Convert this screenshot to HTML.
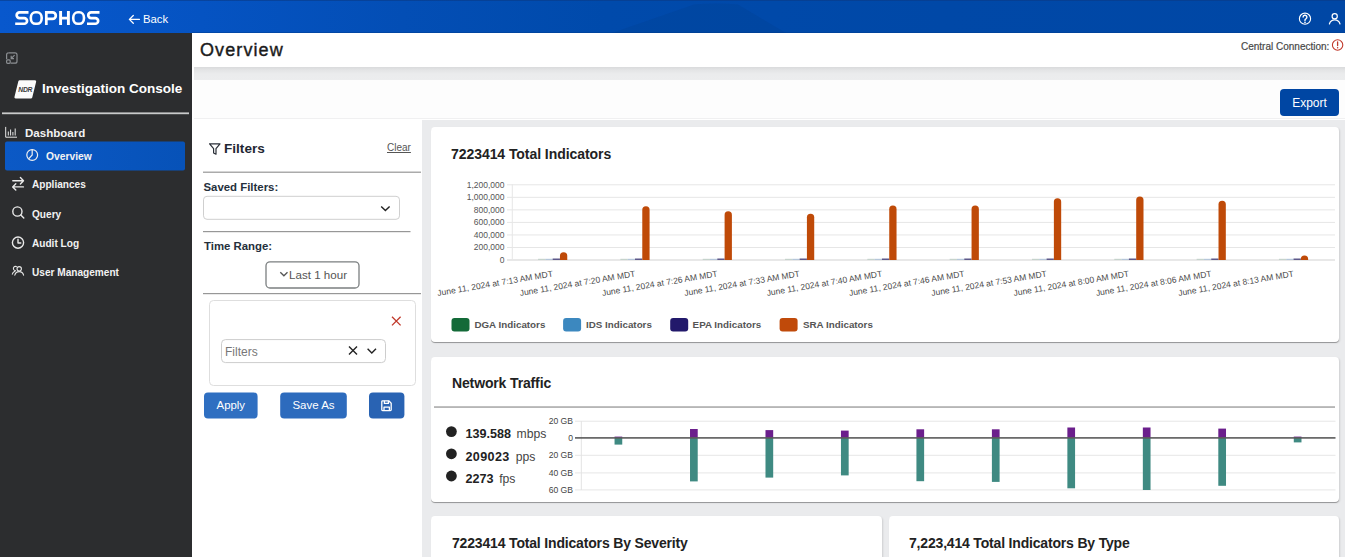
<!DOCTYPE html>
<html><head><meta charset="utf-8">
<style>
*{box-sizing:border-box;margin:0;padding:0}
svg text{font-family:"Liberation Sans",sans-serif}
html,body{width:1345px;height:557px;overflow:hidden;background:#fff;font-family:"Liberation Sans",sans-serif}
.a{position:absolute}
#hdr{left:0;top:0;width:1345px;height:33px;background:linear-gradient(90deg,#0858cd 0%,#0553c2 15%,#034eb5 30%,#004aab 45%,#0048a7 70%,#0047a5 100%)}
#side{left:0;top:33px;width:192px;height:524px;background:#2c2d2f}
#titlebar{left:192px;top:33px;width:1153px;height:34px;background:#fff}
#band{left:194px;top:66.5px;width:1151px;height:13.5px;background:linear-gradient(180deg,#d9dadc 0%,#e4e5e6 25%,#ebeced 55%,#ecedee 100%)}
#exportbar{left:194px;top:80px;width:1151px;height:39px;background:#fdfdfd;border-bottom:1px solid #f0f0f1}
#filters{left:194px;top:120px;width:228px;height:437px;background:#fff}
#gray{left:422px;top:120px;width:923px;height:437px;background:#eaebed}
.card{position:absolute;background:#fff;border-radius:4px;box-shadow:0 1px 0 rgba(0,0,0,.28),1px 1px 2px rgba(0,0,0,.12)}
.ttl{position:absolute;font-weight:bold;font-size:14px;color:#222;white-space:nowrap}
.nav{position:absolute;color:#f2f2f2;font-weight:bold;font-size:11px;white-space:nowrap}
.btn{position:absolute;background:#2d6fc0;border-radius:3px;color:#fff;font-size:12.5px;text-align:center}
</style></head><body>
<div id="hdr" class="a"></div>
<svg class="a" style="left:0;top:0" width="110" height="33" viewBox="0 0 110 33">
 <g fill="none" stroke="#fff" stroke-width="2.7">
  <path d="M28.5 12.35H19.5A2.85 2.85 0 0 0 19.5 18.05H24.2A2.85 2.85 0 0 1 24.2 23.75H15.2"/>
  <rect x="30.85" y="12.3" width="10.8" height="11.5" rx="4.6" ry="5.2" stroke-width="2.6"/>
  <path d="M46.3 25.1V12.35H52.5A3.3 3.3 0 0 1 52.5 18.95H46.3"/>
  <path d="M60.6 11V25.1M68.4 11V25.1M60.6 18.1H68.4" stroke-width="2.9"/>
  <rect x="73.25" y="12.3" width="10.7" height="11.5" rx="4.6" ry="5.2" stroke-width="2.6"/>
  <path d="M99.5 12.35H91.1A2.85 2.85 0 0 0 91.1 18.05H95.3A2.85 2.85 0 0 1 95.3 23.75H87"/>
 </g>
</svg>
<div class="a" style="left:143px;top:12.5px;color:#fff;font-size:11.3px;white-space:nowrap">Back</div>


<div id="side" class="a"></div>

<!-- sidebar -->
<svg class="a" style="left:0;top:0" width="192" height="300" viewBox="0 0 192 300">
 <g fill="none" stroke="#8b8e92" stroke-width="1.2">
  <path d="M8.6 52.8h6.4a2 2 0 0 1 2 2v6.4a2 2 0 0 1-2 2h-4.4"/>
  <path d="M6.6 59.2v-4.4a2 2 0 0 1 2-2"/>
  <rect x="6.6" y="59.9" width="3.6" height="3.4" rx="1"/>
  <path d="M14.6 55.2l-3.2 3.2M11.2 55.8v2.8h2.8"/>
 </g>
  <path d="M18.4 80.2h16.6a1.2 1.2 0 0 1 1.15 1.5l-3.9 15.8a1.4 1.4 0 0 1-1.35 1H15.6a1.2 1.2 0 0 1-1.15-1.5l3.9-15.8a1.4 1.4 0 0 1 1.35-1z" fill="#fbfbfb"/>
 <text x="25.2" y="92.2" font-family="Liberation Sans" font-weight="bold" font-style="italic" font-size="6.8" fill="#3a3a3a" text-anchor="middle" letter-spacing="-0.3">NDR</text>
 <rect x="2" y="112.4" width="187" height="1.8" fill="#c9cacb"/>
 <g fill="none" stroke="#e8e8e8" stroke-width="1">
  <path d="M5.7 126.9v10.3h11.3"/>
  <path d="M8.3 135.5v-4M10.6 135.5v-6M12.9 135.5v-3.5M15.2 135.5v-7"/>
 </g>
 <defs><linearGradient id="hl" x1="0" x2="1" y1="0" y2="0"><stop offset="0" stop-color="#0b59c6"/><stop offset="1" stop-color="#0752b8"/></linearGradient></defs><rect x="5" y="141.5" width="180" height="29" rx="2" fill="url(#hl)"/>
 <g fill="none" stroke="#f0f0f0" stroke-width="1.2">
  <circle cx="32.2" cy="155" r="5.4"/>
  <path d="M32.2 149.6v5.4l-3.6 3.8"/>
 </g>
 <g fill="none" stroke="#eaeaea" stroke-width="1.4" stroke-linecap="round" stroke-linejoin="round">
  <path d="M12.8 180.8h10.6M20.4 177.6l3.1 3.2-3.1 3.2"/>
  <path d="M23.4 186.9H12.8M15.8 183.7l-3.1 3.2 3.1 3.2"/>
  <circle cx="17.4" cy="211.5" r="4.6"/>
  <path d="M20.8 214.9l3 3.2"/>
  <circle cx="18" cy="242.6" r="5.6"/>
  <path d="M18 239.2v3.8h2.8"/>
 </g>
 <g fill="none" stroke="#e6e6e6" stroke-width="1.1" stroke-linecap="round">
  <circle cx="19.2" cy="268.8" r="2.2"/>
  <path d="M14.8 275.2c0.6-2.4 2.4-3.6 4.4-3.6s3.8 1.2 4.4 3.6"/>
  <path d="M16.4 266.6a2.1 2.1 0 1 0-1 4M12.3 274.2c.4-1.6 1.4-2.6 2.6-3"/>
 </g>
</svg>
<div class="a" style="left:42px;top:81px;color:#fff;font-weight:bold;font-size:13.5px;white-space:nowrap">Investigation Console</div>
<div class="nav" style="left:25px;top:127px;font-size:11.55px">Dashboard</div>
<div class="nav" style="left:46px;top:151px;font-size:10.3px">Overview</div>
<div class="nav" style="left:32px;top:179.3px;font-size:10.1px">Appliances</div>
<div class="nav" style="left:32px;top:208.5px;font-size:10.1px">Query</div>
<div class="nav" style="left:32px;top:237.5px;font-size:10.1px">Audit Log</div>
<div class="nav" style="left:32px;top:266.5px;font-size:10.1px">User Management</div>
<div id="titlebar" class="a"></div>
<div class="a" style="left:200px;top:40px;font-size:18px;color:#1b1b1b;letter-spacing:1.1px;-webkit-text-stroke:0.4px #1b1b1b">Overview</div>
<div class="a" style="left:1241px;top:41px;font-size:10px;color:#484848;-webkit-text-stroke:0.2px #484848;white-space:nowrap">Central Connection:</div>
<div id="band" class="a"></div>
<div id="exportbar" class="a"></div>
<div class="a" style="left:1280px;top:89px;width:59px;height:27px;background:#0046a3;border-radius:4px;color:#fff;font-size:12px;text-align:center;line-height:29px">Export</div>
<div id="filters" class="a"></div>
<div id="gray" class="a"></div>
<!-- filters panel -->
<svg class="a" style="left:194px;top:120px" width="228" height="310" viewBox="194 120 228 310">
 <path d="M209.6 143.8h10.4l-4 4.8v5.6l-2.4-1.2v-4.4z" fill="none" stroke="#2a2f38" stroke-width="1.2" stroke-linejoin="round"/>
 <rect x="203" y="171.6" width="218" height="1.2" fill="#979797"/>
 <rect x="203.5" y="196.3" width="196" height="23" rx="3.5" fill="#fff" stroke="#cfcfcf" stroke-width="1"/>
 <path d="M381.2 206.4l4.2 4.2 4.2-4.2" fill="none" stroke="#222" stroke-width="1.4"/>
 <rect x="203" y="231" width="207.5" height="1.2" fill="#979797"/>
 <rect x="266" y="261.8" width="93" height="26.2" rx="4" fill="#fff" stroke="#7b7f80" stroke-width="1.3"/>
 <path d="M280.3 272.2l3.6 3.6 3.6-3.6" fill="none" stroke="#555" stroke-width="1.3"/>
 <rect x="203" y="293" width="218" height="1.2" fill="#979797"/>
 <rect x="209.5" y="300.5" width="206" height="85" rx="4" fill="#fff" stroke="#dedede" stroke-width="1"/>
 <path d="M392 316.8l8.6 8.6M400.6 316.8l-8.6 8.6" stroke="#c0392b" stroke-width="1.3"/>
 <rect x="221.5" y="339.6" width="164" height="23" rx="4" fill="#fff" stroke="#cdcdcd" stroke-width="1"/>
 <path d="M349 346.6l8 8M357 346.6l-8 8" stroke="#222" stroke-width="1.4"/>
 <path d="M367.6 348.8l4.2 4.2 4.2-4.2" fill="none" stroke="#222" stroke-width="1.4"/>
 <rect x="204" y="392.6" width="53.6" height="26" rx="4" fill="#2f6fc1"/>
 <rect x="280.2" y="392.6" width="66.6" height="26" rx="4" fill="#2d6bbd"/>
 <rect x="369" y="392.6" width="35.4" height="26" rx="4" fill="#2963b3"/>
 <g fill="none" stroke="#fff" stroke-width="1.3" stroke-linejoin="round">
  <path d="M382.6 400.8h6.2l2.4 2.4v6.6a.8.8 0 0 1-.8.8h-7.8a.8.8 0 0 1-.8-.8v-8.2a.8.8 0 0 1 .8-.8z"/>
  <path d="M384.4 400.8v2.6h4v-2.6M384 410.6v-3.4h5.4v3.4"/>
 </g>
</svg>
<div class="a" style="left:224px;top:140.5px;font-weight:bold;font-size:13.6px;color:#1f2733">Filters</div>
<div class="a" style="left:387px;top:142.2px;font-size:10px;color:#555;text-decoration:underline">Clear</div>
<div class="a" style="left:203.5px;top:180.5px;font-weight:bold;font-size:11.4px;color:#25303c;white-space:nowrap">Saved Filters:</div>
<div class="a" style="left:204px;top:239.5px;font-weight:bold;font-size:11.4px;color:#25303c;white-space:nowrap">Time Range:</div>
<div class="a" style="left:289px;top:267.5px;font-size:11.6px;color:#555;white-space:nowrap">Last 1 hour</div>
<div class="a" style="left:225px;top:344.5px;font-size:12px;color:#777">Filters</div>
<div class="a" style="left:204px;top:399px;width:53.6px;text-align:center;font-size:11.4px;color:#fff">Apply</div>
<div class="a" style="left:280.2px;top:399px;width:66.6px;text-align:center;font-size:11.5px;color:#fff">Save As</div>


<div class="card" style="left:431px;top:127px;width:908px;height:215px"></div>
<div class="card" style="left:431px;top:357px;width:908px;height:145px"></div>
<div class="card" style="left:431px;top:516px;width:451px;height:60px"></div>
<div class="card" style="left:889px;top:516px;width:450px;height:60px"></div>

<div class="ttl" style="left:451px;top:146px;letter-spacing:-0.06px">7223414 Total Indicators</div>
<div class="ttl" style="left:452px;top:375px;letter-spacing:-0.14px">Network Traffic</div>
<div class="ttl" style="left:452px;top:535px;letter-spacing:-0.17px">7223414 Total Indicators By Severity</div>
<div class="ttl" style="left:909px;top:535px;letter-spacing:-0.18px">7,223,414 Total Indicators By Type</div>

<svg class="a" style="left:0;top:0" width="1345" height="60" viewBox="0 0 1345 60">
 <rect x="0" y="0" width="1345" height="1" fill="#0a3a86" opacity="0.6"/>
 <rect x="192" y="32" width="1153" height="1" fill="#003d8f" opacity="0.5"/>
 <path d="M612 33L694 4.5Q716 2.5 738 4.5L786 33z" fill="#00306f" opacity="0.12"/>
 <path d="M129.4 19.4h10M133.3 15.5l-3.9 3.9 3.9 3.9" fill="none" stroke="#fff" stroke-width="1.3" stroke-linecap="round" stroke-linejoin="round"/>
 <g fill="none" stroke="#fff" stroke-width="1.1">
  <circle cx="1305" cy="18.7" r="5.6"/>
  <path d="M1303.1 17.1a1.9 1.9 0 1 1 2.8 1.7c-.6.3-.9.7-.9 1.3v.4" stroke-linecap="round" stroke-width="1.4"/>
 </g>
 <circle cx="1305" cy="22.3" r="0.85" fill="#fff"/>
 <g fill="none" stroke="#fff" stroke-width="1.2" stroke-linecap="round">
  <circle cx="1334.7" cy="16.2" r="2.6"/>
  <path d="M1329.4 24c.7-2.6 2.8-4.2 5.3-4.2s4.6 1.6 5.3 4.2"/>
 </g>
 <circle cx="1337.6" cy="45" r="5.2" fill="none" stroke="#c0392b" stroke-width="1.1"/>
 <path d="M1337.6 42v3.6" stroke="#c0392b" stroke-width="1.3" stroke-linecap="round"/>
 <circle cx="1337.6" cy="47.8" r="0.75" fill="#c0392b"/>
</svg>
<!--CHARTS--><svg class="a" style="left:0;top:0" width="1345" height="557" viewBox="0 0 1345 557">
<rect x="507" y="259.50" width="828" height="1" fill="#d2d2d2"/>
<text x="504.5" y="263.00" text-anchor="end" font-size="8.5" fill="#555">0</text>
<rect x="507" y="246.97" width="828" height="1" fill="#e6e6e6"/>
<text x="504.5" y="250.47" text-anchor="end" font-size="8.5" fill="#555">200,000</text>
<rect x="507" y="234.43" width="828" height="1" fill="#e6e6e6"/>
<text x="504.5" y="237.93" text-anchor="end" font-size="8.5" fill="#555">400,000</text>
<rect x="507" y="221.90" width="828" height="1" fill="#e6e6e6"/>
<text x="504.5" y="225.40" text-anchor="end" font-size="8.5" fill="#555">600,000</text>
<rect x="507" y="209.37" width="828" height="1" fill="#e6e6e6"/>
<text x="504.5" y="212.87" text-anchor="end" font-size="8.5" fill="#555">800,000</text>
<rect x="507" y="196.83" width="828" height="1" fill="#e6e6e6"/>
<text x="504.5" y="200.33" text-anchor="end" font-size="8.5" fill="#555">1,000,000</text>
<rect x="507" y="184.30" width="828" height="1" fill="#e6e6e6"/>
<text x="504.5" y="187.80" text-anchor="end" font-size="8.5" fill="#555">1,200,000</text>
<rect x="511.8" y="184.30" width="1" height="75.70" fill="#e6e6e6"/>
<rect x="538.06" y="258.80" width="7.30" height="1.2" fill="#c5d3cc"/>
<rect x="545.36" y="258.80" width="7.30" height="1.2" fill="#b5c6da"/>
<rect x="552.66" y="258.50" width="7.30" height="1.5" fill="#5d588a"/>
<path d="M559.96 260.00V255.90A3.60 3.60 0 0 1 563.56 252.30H563.66A3.60 3.60 0 0 1 567.26 255.90V260.00z" fill="#bf4a08"/>
<text transform="translate(553.26 276.4) rotate(-9.6)" text-anchor="end" font-size="8.5" fill="#4a4a4a">June 11, 2024 at 7:13 AM MDT</text>
<rect x="620.38" y="258.80" width="7.30" height="1.2" fill="#c5d3cc"/>
<rect x="627.68" y="258.80" width="7.30" height="1.2" fill="#b5c6da"/>
<rect x="634.98" y="258.50" width="7.30" height="1.5" fill="#5d588a"/>
<path d="M642.28 260.00V209.90A3.60 3.60 0 0 1 645.88 206.30H645.98A3.60 3.60 0 0 1 649.58 209.90V260.00z" fill="#bf4a08"/>
<text transform="translate(635.58 276.4) rotate(-9.6)" text-anchor="end" font-size="8.5" fill="#4a4a4a">June 11, 2024 at 7:20 AM MDT</text>
<rect x="702.70" y="258.80" width="7.30" height="1.2" fill="#c5d3cc"/>
<rect x="710.00" y="258.80" width="7.30" height="1.2" fill="#b5c6da"/>
<rect x="717.30" y="258.50" width="7.30" height="1.5" fill="#5d588a"/>
<path d="M724.60 260.00V214.90A3.60 3.60 0 0 1 728.20 211.30H728.30A3.60 3.60 0 0 1 731.90 214.90V260.00z" fill="#bf4a08"/>
<text transform="translate(717.90 276.4) rotate(-9.6)" text-anchor="end" font-size="8.5" fill="#4a4a4a">June 11, 2024 at 7:26 AM MDT</text>
<rect x="785.02" y="258.80" width="7.30" height="1.2" fill="#c5d3cc"/>
<rect x="792.32" y="258.80" width="7.30" height="1.2" fill="#b5c6da"/>
<rect x="799.62" y="258.50" width="7.30" height="1.5" fill="#5d588a"/>
<path d="M806.92 260.00V217.30A3.60 3.60 0 0 1 810.52 213.70H810.62A3.60 3.60 0 0 1 814.22 217.30V260.00z" fill="#bf4a08"/>
<text transform="translate(800.22 276.4) rotate(-9.6)" text-anchor="end" font-size="8.5" fill="#4a4a4a">June 11, 2024 at 7:33 AM MDT</text>
<rect x="867.34" y="258.80" width="7.30" height="1.2" fill="#c5d3cc"/>
<rect x="874.64" y="258.80" width="7.30" height="1.2" fill="#b5c6da"/>
<rect x="881.94" y="258.50" width="7.30" height="1.5" fill="#5d588a"/>
<path d="M889.24 260.00V209.20A3.60 3.60 0 0 1 892.84 205.60H892.94A3.60 3.60 0 0 1 896.54 209.20V260.00z" fill="#bf4a08"/>
<text transform="translate(882.54 276.4) rotate(-9.6)" text-anchor="end" font-size="8.5" fill="#4a4a4a">June 11, 2024 at 7:40 AM MDT</text>
<rect x="949.66" y="258.80" width="7.30" height="1.2" fill="#c5d3cc"/>
<rect x="956.96" y="258.80" width="7.30" height="1.2" fill="#b5c6da"/>
<rect x="964.26" y="258.50" width="7.30" height="1.5" fill="#5d588a"/>
<path d="M971.56 260.00V209.00A3.60 3.60 0 0 1 975.16 205.40H975.26A3.60 3.60 0 0 1 978.86 209.00V260.00z" fill="#bf4a08"/>
<text transform="translate(964.86 276.4) rotate(-9.6)" text-anchor="end" font-size="8.5" fill="#4a4a4a">June 11, 2024 at 7:46 AM MDT</text>
<rect x="1031.98" y="258.80" width="7.30" height="1.2" fill="#c5d3cc"/>
<rect x="1039.28" y="258.80" width="7.30" height="1.2" fill="#b5c6da"/>
<rect x="1046.58" y="258.50" width="7.30" height="1.5" fill="#5d588a"/>
<path d="M1053.88 260.00V201.80A3.60 3.60 0 0 1 1057.48 198.20H1057.58A3.60 3.60 0 0 1 1061.18 201.80V260.00z" fill="#bf4a08"/>
<text transform="translate(1047.18 276.4) rotate(-9.6)" text-anchor="end" font-size="8.5" fill="#4a4a4a">June 11, 2024 at 7:53 AM MDT</text>
<rect x="1114.30" y="258.80" width="7.30" height="1.2" fill="#c5d3cc"/>
<rect x="1121.60" y="258.80" width="7.30" height="1.2" fill="#b5c6da"/>
<rect x="1128.90" y="258.50" width="7.30" height="1.5" fill="#5d588a"/>
<path d="M1136.20 260.00V200.10A3.60 3.60 0 0 1 1139.80 196.50H1139.90A3.60 3.60 0 0 1 1143.50 200.10V260.00z" fill="#bf4a08"/>
<text transform="translate(1129.50 276.4) rotate(-9.6)" text-anchor="end" font-size="8.5" fill="#4a4a4a">June 11, 2024 at 8:00 AM MDT</text>
<rect x="1196.62" y="258.80" width="7.30" height="1.2" fill="#c5d3cc"/>
<rect x="1203.92" y="258.80" width="7.30" height="1.2" fill="#b5c6da"/>
<rect x="1211.22" y="258.50" width="7.30" height="1.5" fill="#5d588a"/>
<path d="M1218.52 260.00V204.40A3.60 3.60 0 0 1 1222.12 200.80H1222.22A3.60 3.60 0 0 1 1225.82 204.40V260.00z" fill="#bf4a08"/>
<text transform="translate(1211.82 276.4) rotate(-9.6)" text-anchor="end" font-size="8.5" fill="#4a4a4a">June 11, 2024 at 8:06 AM MDT</text>
<rect x="1278.94" y="258.80" width="7.30" height="1.2" fill="#c5d3cc"/>
<rect x="1286.24" y="258.80" width="7.30" height="1.2" fill="#b5c6da"/>
<rect x="1293.54" y="258.50" width="7.30" height="1.5" fill="#5d588a"/>
<path d="M1300.84 260.00V259.00A3.60 3.60 0 0 1 1304.44 255.40H1304.54A3.60 3.60 0 0 1 1308.14 259.00V260.00z" fill="#bf4a08"/>
<text transform="translate(1294.14 276.4) rotate(-9.6)" text-anchor="end" font-size="8.5" fill="#4a4a4a">June 11, 2024 at 8:13 AM MDT</text>
<rect x="451.5" y="318" width="18" height="13.6" rx="3" fill="#136a38"/>
<text x="474.4" y="328" font-size="9.8" font-weight="bold" fill="#555">DGA Indicators</text>
<rect x="563.1" y="318" width="18" height="13.6" rx="3" fill="#3c88bf"/>
<text x="586.0" y="328" font-size="9.8" font-weight="bold" fill="#555">IDS Indicators</text>
<rect x="670.2" y="318" width="18" height="13.6" rx="3" fill="#22196b"/>
<text x="692.6" y="328" font-size="9.8" font-weight="bold" fill="#555">EPA Indicators</text>
<rect x="779.6" y="318" width="18" height="13.6" rx="3" fill="#c04a0a"/>
<text x="803.0" y="328" font-size="9.8" font-weight="bold" fill="#555">SRA Indicators</text>
<rect x="434" y="406.3" width="901" height="1.5" fill="#a5a5a5"/>
<rect x="575" y="420.70" width="760.5" height="1" fill="#e6e6e6"/>
<rect x="575" y="454.80" width="760.5" height="1" fill="#e6e6e6"/>
<rect x="575" y="472.40" width="760.5" height="1" fill="#e6e6e6"/>
<rect x="575" y="489.40" width="760.5" height="1" fill="#e6e6e6"/>
<text x="573" y="424.20" text-anchor="end" font-size="8.6" fill="#444">20 GB</text>
<text x="573" y="440.90" text-anchor="end" font-size="8.6" fill="#444">0</text>
<text x="573" y="458.30" text-anchor="end" font-size="8.6" fill="#444">20 GB</text>
<text x="573" y="475.90" text-anchor="end" font-size="8.6" fill="#444">40 GB</text>
<text x="573" y="492.90" text-anchor="end" font-size="8.6" fill="#444">60 GB</text>
<rect x="580.8" y="421" width="1" height="69" fill="#e3e3e3"/>
<rect x="614.55" y="436.60" width="7.7" height="1.30" fill="#6b1f8c"/>
<rect x="614.55" y="437.90" width="7.7" height="6.70" fill="#3f8a82"/>
<rect x="690.02" y="429.00" width="7.7" height="8.90" fill="#6b1f8c"/>
<rect x="690.02" y="437.90" width="7.7" height="43.50" fill="#3f8a82"/>
<rect x="765.49" y="430.10" width="7.7" height="7.80" fill="#6b1f8c"/>
<rect x="765.49" y="437.90" width="7.7" height="39.70" fill="#3f8a82"/>
<rect x="840.96" y="430.60" width="7.7" height="7.30" fill="#6b1f8c"/>
<rect x="840.96" y="437.90" width="7.7" height="37.50" fill="#3f8a82"/>
<rect x="916.43" y="429.30" width="7.7" height="8.60" fill="#6b1f8c"/>
<rect x="916.43" y="437.90" width="7.7" height="43.30" fill="#3f8a82"/>
<rect x="991.90" y="429.30" width="7.7" height="8.60" fill="#6b1f8c"/>
<rect x="991.90" y="437.90" width="7.7" height="44.00" fill="#3f8a82"/>
<rect x="1067.37" y="427.50" width="7.7" height="10.40" fill="#6b1f8c"/>
<rect x="1067.37" y="437.90" width="7.7" height="50.40" fill="#3f8a82"/>
<rect x="1142.84" y="427.50" width="7.7" height="10.40" fill="#6b1f8c"/>
<rect x="1142.84" y="437.90" width="7.7" height="52.10" fill="#3f8a82"/>
<rect x="1218.31" y="428.60" width="7.7" height="9.30" fill="#6b1f8c"/>
<rect x="1218.31" y="437.90" width="7.7" height="47.90" fill="#3f8a82"/>
<rect x="1293.78" y="436.60" width="7.7" height="1.30" fill="#6b1f8c"/>
<rect x="1293.78" y="437.90" width="7.7" height="4.50" fill="#3f8a82"/>
<rect x="575" y="437.10" width="760.5" height="1.6" fill="#5a5a5a"/>
<circle cx="451.4" cy="431.6" r="5.4" fill="#222"/>
<circle cx="451.4" cy="453.8" r="5.4" fill="#222"/>
<circle cx="451.4" cy="476" r="5.4" fill="#222"/>
</svg>
<div class="a" style="left:465.5px;top:427px;font-size:12.6px;font-weight:bold;color:#222">139.588</div>
<div class="a" style="left:516.5px;top:427px;font-size:12.2px;color:#444">mbps</div>
<div class="a" style="left:465.5px;top:449.6px;font-size:12.6px;font-weight:bold;color:#222;letter-spacing:0.35px">209023</div>
<div class="a" style="left:515.7px;top:449.6px;font-size:12.2px;color:#444">pps</div>
<div class="a" style="left:465.5px;top:471.6px;font-size:12.6px;font-weight:bold;color:#222">2273</div>
<div class="a" style="left:499.2px;top:471.6px;font-size:12.2px;color:#444">fps</div>
<!--/CHARTS-->
</body></html>
